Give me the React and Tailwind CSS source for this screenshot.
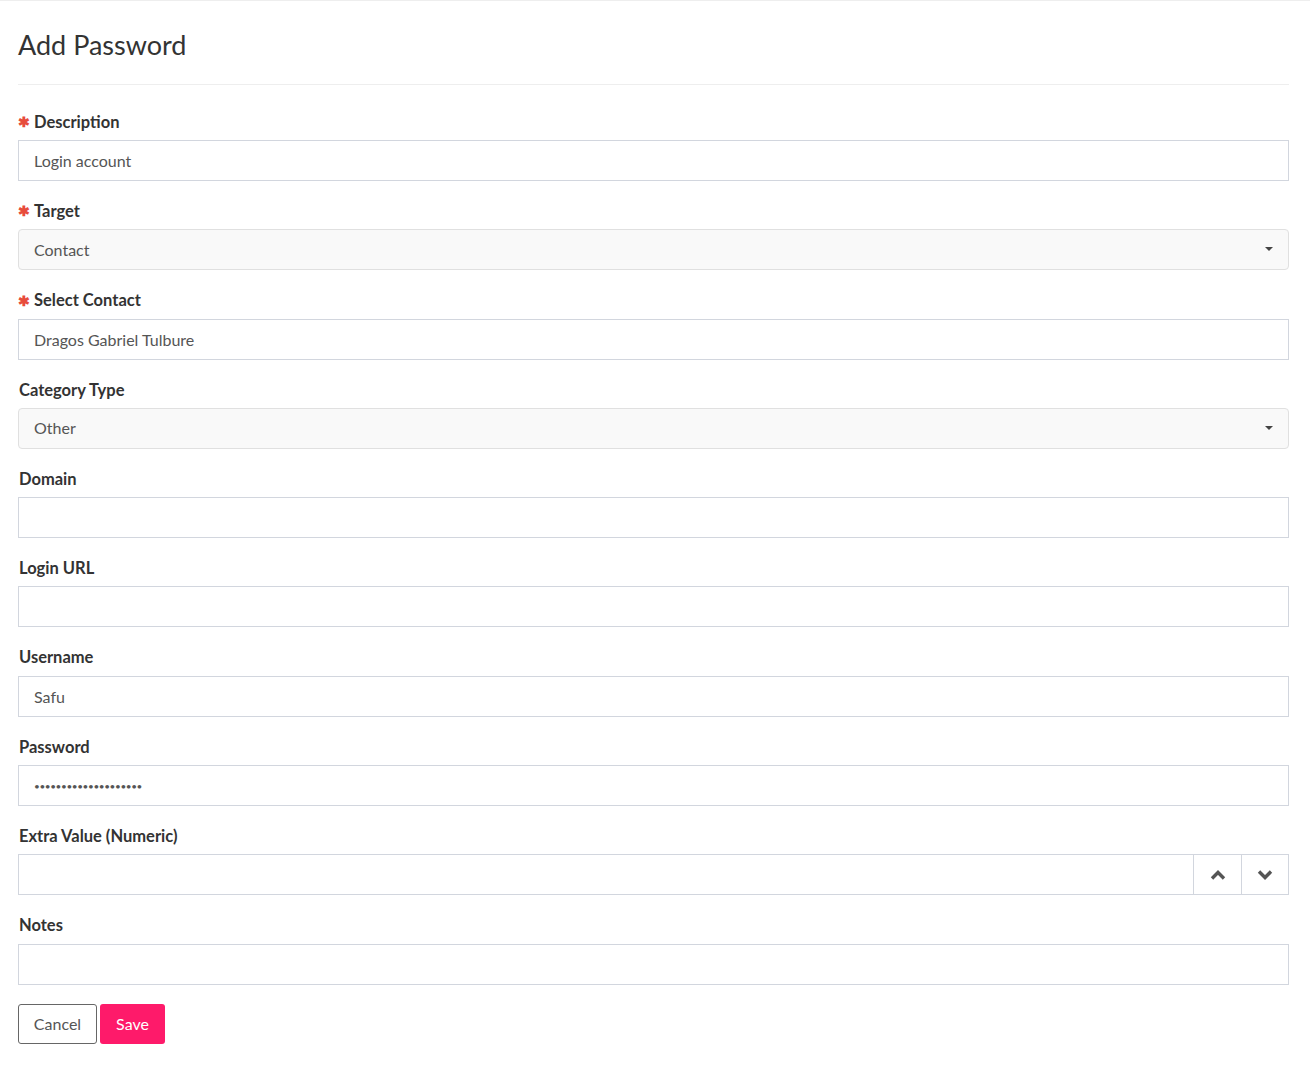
import React from 'react';

const font = { fontFamily: 'Lato, "Liberation Sans", sans-serif' };

function Label({ children, required }) {
  return (
    <label className="flex items-center h-[22px] mb-[7px] pl-[1px] text-[16.5px] font-bold text-[#333]">
      {required && <span className="text-[#e74c3c] mr-[4px] -ml-[1px] text-[14px] leading-none">✱</span>}
      {children}
    </label>
  );
}

function TextInput({ value, type = 'text' }) {
  return (
    <input
      type={type}
      defaultValue={value}
      className="w-full h-[41px] border border-[#d2d6de] bg-white px-[15px] text-[16px] text-[#555] outline-none"
      style={font}
    />
  );
}

function SelectBox({ value }) {
  return (
    <div className="relative w-full h-[41px] border border-[#e0e0e0] bg-[#f9f9f9] rounded-[4px] flex items-center px-[15px] text-[16px] text-[#555]">
      {value}
      <span className="absolute right-[15px] top-[17px] w-0 h-0 border-l-[4px] border-r-[4px] border-t-[4px] border-l-transparent border-r-transparent border-t-[#444]" />
    </div>
  );
}

function Field({ label, required, children }) {
  return (
    <div className="mb-[19.3px]">
      <Label required={required}>{label}</Label>
      {children}
    </div>
  );
}

export default function App() {
  return (
    <div className="min-h-screen bg-white border-t border-[#eee] px-[18px]" style={font}>
      <h1 className="pt-[27px] pb-[22px] text-[27px] leading-[34px] text-[#333] border-b border-[#eee] mr-[3px]">Add Password</h1>
      <form className="pt-[26px] pr-[3px]">
        <Field label="Description" required>
          <TextInput value="Login account" />
        </Field>
        <Field label="Target" required>
          <SelectBox value="Contact" />
        </Field>
        <Field label="Select Contact" required>
          <TextInput value="Dragos Gabriel Tulbure" />
        </Field>
        <Field label="Category Type">
          <SelectBox value="Other" />
        </Field>
        <Field label="Domain">
          <TextInput value="" />
        </Field>
        <Field label="Login URL">
          <TextInput value="" />
        </Field>
        <Field label="Username">
          <TextInput value="Safu" />
        </Field>
        <Field label="Password">
          <div className="w-full h-[41px] border border-[#d2d6de] bg-white px-[15px] flex items-center text-[#555] text-[10px] tracking-[-0.4px] leading-none">
            ••••••••••••••••••••
          </div>
        </Field>
        <Field label="Extra Value (Numeric)">
          <div className="flex w-full h-[41px] border border-[#d2d6de] bg-white">
            <div className="flex-1" />
            <button type="button" className="w-[48px] h-full border-l border-[#d2d6de] flex items-center justify-center">
              <svg width="16" height="10" viewBox="0 0 16 10"><path d="M2 8.5 L8 2.5 L14 8.5" fill="none" stroke="#555" strokeWidth="3.4" /></svg>
            </button>
            <button type="button" className="w-[47px] h-full border-l border-[#d2d6de] flex items-center justify-center">
              <svg width="16" height="10" viewBox="0 0 16 10"><path d="M2 1.5 L8 7.5 L14 1.5" fill="none" stroke="#555" strokeWidth="3.4" /></svg>
            </button>
          </div>
        </Field>
        <Field label="Notes">
          <TextInput value="" />
        </Field>
        <div className="flex gap-[3px]">
          <button type="button" className="h-[40px] w-[79px] border border-[#666] rounded-[3px] text-[16px] text-[#555] bg-white">Cancel</button>
          <button type="button" className="h-[40px] w-[65px] rounded-[3px] text-[16px] text-white bg-[#fe1a6a]">Save</button>
        </div>
      </form>
    </div>
  );
}
